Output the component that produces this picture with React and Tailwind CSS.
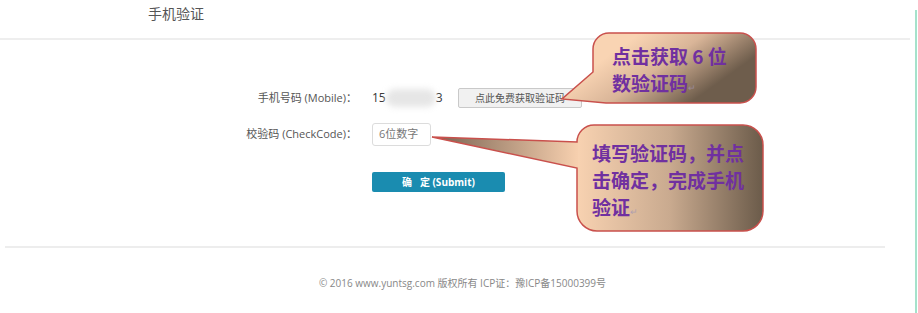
import React from "react";

export default function App() {
  return (
    <div className="relative w-[918px] h-[313px] overflow-hidden bg-white flex font-['Open_Sans','Noto_Sans_CJK_SC',sans-serif]">
      <div className="w-[915px] flex flex-col">
        {/* header */}
        <div className="h-[38px] pl-[148px] pt-[4px] text-[14px] leading-[20px] text-[#555]">手机验证</div>
        <div className="h-[2px] w-[910px] bg-[#eeeeee]" />

        {/* form */}
        <div className="mt-[48px] flex items-center h-[20px]">
          <div className="w-[357px] text-right text-[11px] text-[#555]">手机号码 (Mobile)：</div>
          <div className="ml-[15px] w-[86px] flex items-center text-[12px] text-[#333]">
            <span>15</span>
            <span className="w-[50px] h-[18px] bg-[#e6e6e6] blur-[3px] rounded-full" />
            <span>3</span>
          </div>
          <button className="w-[124px] h-[20px] border border-[#c9c9c9] bg-[#f1f1f1] rounded-[2px] text-[10px] text-[#555] leading-none">点此免费获取验证码</button>
        </div>

        <div className="mt-[15px] flex items-center h-[23px]">
          <div className="w-[357px] text-right text-[11px] text-[#555]">校验码 (CheckCode)：</div>
          <div className="ml-[15px] w-[59px] h-[23px] border border-[#dcdcdc] rounded-[3px] pl-[6px] flex items-center text-[11px] text-[#777]">6位数字</div>
        </div>

        <div className="mt-[22px] pl-[372px]">
          <button className="w-[133px] h-[20px] bg-[#1a8cb0] rounded-[2px] text-white text-[10px] font-bold leading-none">确&nbsp;&nbsp;&nbsp;定 (Submit)</button>
        </div>

        <div className="mt-[54px] ml-[5px] h-[2px] w-[880px] bg-[#ededed]" />

        <div className="mt-[28px] text-center text-[10px] leading-[14px] text-[#888] pl-[10px]">
          © 2016 www.yuntsg.com 版权所有 ICP证：豫ICP备15000399号
        </div>
      </div>
      <div className="w-[3px] pt-[10px] flex">
        <div className="w-[2px] bg-[#a5e2cb]" />
      </div>

      {/* callouts overlay */}
      <svg className="absolute left-0 top-0" width="918" height="313" viewBox="0 0 918 313">
        <defs>
          <linearGradient id="g1" gradientUnits="userSpaceOnUse" x1="640" y1="33" x2="690" y2="103">
            <stop offset="0" stopColor="#f9d4b3" />
            <stop offset="0.45" stopColor="#d9b598" />
            <stop offset="1" stopColor="#6e5d4c" />
          </linearGradient>
          <linearGradient id="g2" gradientUnits="userSpaceOnUse" x1="577" y1="0" x2="763" y2="0">
            <stop offset="0" stopColor="#f8d2b1" />
            <stop offset="0.5" stopColor="#c9aa8f" />
            <stop offset="1" stopColor="#6b5b4a" />
          </linearGradient>
          <linearGradient id="g2t" gradientUnits="userSpaceOnUse" x1="440" y1="0" x2="577" y2="0">
            <stop offset="0" stopColor="#7c6655" />
            <stop offset="0.35" stopColor="#a88b74" />
            <stop offset="1" stopColor="#f6cfae" />
          </linearGradient>
        </defs>
        <path
          d="M 609 33 H 740 A 16 16 0 0 1 756 49 V 87 A 16 16 0 0 1 740 103 H 606 L 562 99 L 593 72 V 49 A 16 16 0 0 1 609 33 Z"
          fill="url(#g1)"
          stroke="#c9504c"
          strokeWidth="1.5"
        />
        <path
          d="M 597 125 H 743 A 20 20 0 0 1 763 145 V 211 A 20 20 0 0 1 743 231 H 597 A 20 20 0 0 1 577 211 V 168 L 432 137 L 577 142 A 17 17 0 0 1 594 125 Z"
          fill="url(#g2)"
        />
        <path d="M 578 168 L 432 137 L 578 142 Z" fill="url(#g2t)" />
        <path
          d="M 597 125 H 743 A 20 20 0 0 1 763 145 V 211 A 20 20 0 0 1 743 231 H 597 A 20 20 0 0 1 577 211 V 168 L 432 137 L 577 142 A 17 17 0 0 1 594 125 Z"
          fill="none"
          stroke="#c9504c"
          strokeWidth="1.5"
        />
      </svg>

      <div className="absolute left-[612px] top-[42px] text-[19px] leading-[27px] font-bold text-[#7030a0] font-['Noto_Sans_CJK_SC',sans-serif]">
        <div>点击获取 6 位</div>
        <div>数验证码<span className="text-[9px] font-normal text-[#9a8a9a]">↵</span></div>
      </div>
      <div className="absolute left-[592px] top-[139px] text-[19px] leading-[27px] font-bold text-[#7030a0] font-['Noto_Sans_CJK_SC',sans-serif]">
        <div>填写验证码，并点</div>
        <div>击确定，完成手机</div>
        <div>验证<span className="text-[9px] font-normal text-[#b0a0b0]">↵</span></div>
      </div>
    </div>
  );
}
